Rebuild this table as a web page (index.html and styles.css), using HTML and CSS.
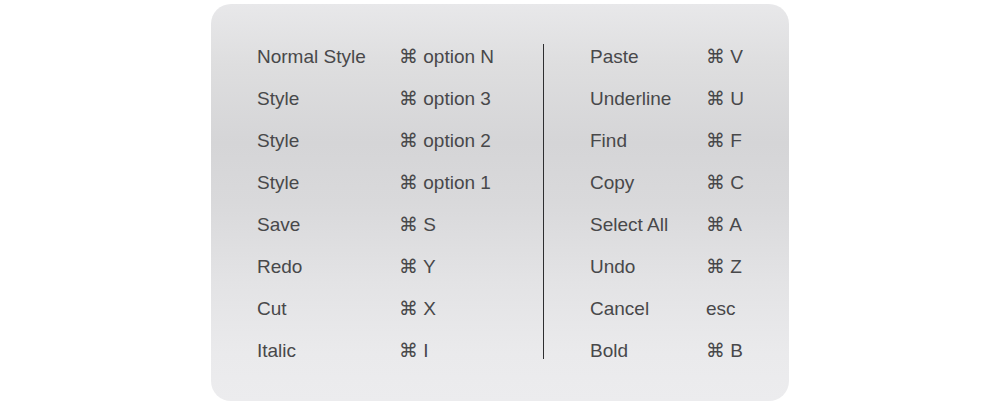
FILE: index.html
```html
<!DOCTYPE html>
<html>
<head>
<meta charset="utf-8">
<link rel="stylesheet" href="styles.css">
</head>
<body>
<div class="card">
  <div class="col left">
    <span class="label">Normal Style</span><span class="key"><span class="cmd">⌘</span> option N</span>
    <span class="label">Style</span><span class="key"><span class="cmd">⌘</span> option 3</span>
    <span class="label">Style</span><span class="key"><span class="cmd">⌘</span> option 2</span>
    <span class="label">Style</span><span class="key"><span class="cmd">⌘</span> option 1</span>
    <span class="label">Save</span><span class="key"><span class="cmd">⌘</span> S</span>
    <span class="label">Redo</span><span class="key"><span class="cmd">⌘</span> Y</span>
    <span class="label">Cut</span><span class="key"><span class="cmd">⌘</span> X</span>
    <span class="label">Italic</span><span class="key"><span class="cmd">⌘</span> I</span>
  </div>
  <div class="divider"></div>
  <div class="col right">
    <span class="label">Paste</span><span class="key"><span class="cmd">⌘</span> V</span>
    <span class="label">Underline</span><span class="key"><span class="cmd">⌘</span> U</span>
    <span class="label">Find</span><span class="key"><span class="cmd">⌘</span> F</span>
    <span class="label">Copy</span><span class="key"><span class="cmd">⌘</span> C</span>
    <span class="label">Select All</span><span class="key"><span class="cmd">⌘</span> A</span>
    <span class="label">Undo</span><span class="key"><span class="cmd">⌘</span> Z</span>
    <span class="label">Cancel</span><span class="key">esc</span>
    <span class="label">Bold</span><span class="key"><span class="cmd">⌘</span> B</span>
  </div>
</div>
</body>
</html>
```
FILE: styles.css
```css
html, body {
  margin: 0;
  padding: 0;
  background: #ffffff;
}
body {
  font-family: "Liberation Sans", Arial, "DejaVu Sans", sans-serif;
  color: #48484a;
}
.card {
  box-sizing: border-box;
  width: 578px;
  height: 397px;
  margin: 4px auto 0;
  border-radius: 20px;
  background: linear-gradient(to bottom, #e8e8ea 0%, #dededf 15%, #d5d5d7 35%, #d9d9db 50%, #e3e3e5 70%, #eaeaec 88%, #ececee 100%);
  display: flex;
  padding: 32px 0 0 46px;
}
.col {
  display: grid;
  grid-auto-rows: 42px;
  align-items: center;
  font-size: 19px;
}
.left {
  grid-template-columns: 142px 144px;
}
.right {
  grid-template-columns: 116px auto;
  padding-left: 46px;
}
.divider {
  width: 1px;
  background: #2e2e30;
  margin-top: 8px;
  height: 315px;
}
.cmd {
  font-family: "DejaVu Sans", sans-serif;
  font-size: 19px;
  line-height: 1;
}
```
